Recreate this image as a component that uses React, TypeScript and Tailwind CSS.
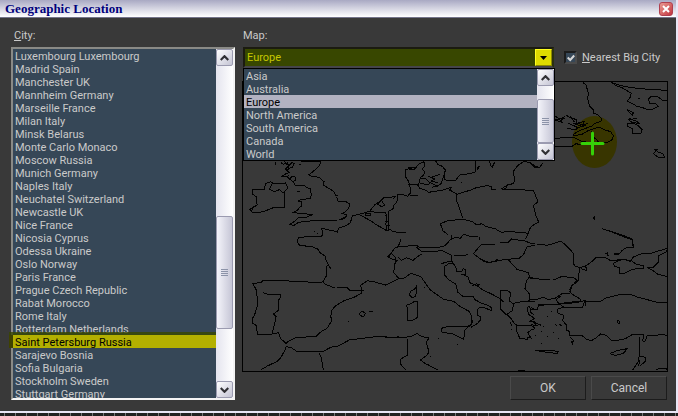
import { ReactNode } from "react";

const cities = [
  "Luxembourg Luxembourg", "Madrid Spain", "Manchester UK", "Mannheim Germany",
  "Marseille France", "Milan Italy", "Minsk Belarus", "Monte Carlo Monaco",
  "Moscow Russia", "Munich Germany", "Naples Italy", "Neuchatel Switzerland",
  "Newcastle UK", "Nice France", "Nicosia Cyprus", "Odessa Ukraine", "Oslo Norway",
  "Paris France", "Prague Czech Republic", "Rabat Morocco", "Rome Italy",
  "Rotterdam Netherlands", "Saint Petersburg Russia", "Sarajevo Bosnia",
  "Sofia Bulgaria", "Stockholm Sweden", "Stuttgart Germany",
];

const maps = ["Asia", "Australia", "Europe", "North America", "South America", "Canada", "World"];

// Coastlines and borders, one tile per region; tile units are a third of a map unit.
const tiles = [
  {
    x: 240, y: 155,
    d: "M105 22v9M122 22l8 6 12-4M134 18l4 10 10 2 8-8 6 4-4 10-10 4-6-4M178 28h4M184 20h58l-4 12-8 8-14 12-10 8 10 4h10l12 4 14 12-2 10 16 10 14 8 6 12 8 2M290 126l4 12 24 2 12 8-4 12-10 10-10 6 12 2 2 6-16 8M148 40l-8 8 8 4-14 6-8 6 14 2 6-4M140 20l6 12-10 10 12 10M150 72l6-8 10 2 2 8-8 6-12-8-6-6M160 80l4 10 30 2 6 6 10 2 4 18-2 12-30 4-8 4 10 2v14l-6 4-4 6-14 8 24 4 36 2-20 8h-22l-16 14-12 8 10 4 16-10 34-4 40-2 40 2M296 194h10l16-10M172 108h8M48 102h26l2-16 16-6 8 6 36-2 8 14-12 14v46l-32 0-30 12-30 4-12-10 24-14-4-10 2-14-12-8v-14zM28 164l12-8-6 14M98 82l-10 20 16 8 14-6 12 10M265 328l-8-14v-10l-16-10-8-12-20-8-34-2-8-14 6-10 30-4 34 2 8-6-4-20 10 2 26 6 12 4 2-12 22-8 14-8 6-22 20-4 28-8 32 2 20 2 4 10-4 26M360 180l30 16 20 14 30 16-2-16h12M376 176h16v4h-16zM386 172l18-22 14-10 14-12 12-2M414 148l10-12 10 14-8 6zM222 230h3M232 236h3M444 302l6 4",
  },
  {
    x: 240, y: 260,
    d: "M258 0l6 12 8 14M262 14l-4 18v18l-10 16-30 2-30-4-24 2-24-4-50-2h-20l-8 8-24 2 12 22 2 30v16l-8 26-6 10v16l10 6 4 22v6h36l28-6 6 18 16 14 10-8 20-10 60-2 14-14 20-12 14-24-4-10 4-20 10-12 26-16 30-10 22-12 2-8-4-16 20-14 22 4 28 8h12M248 66l10 8 22 8h6M292 82l30 2 6 6 44 2M70 98l16 6 12-2 24 2v8l-8 10v30l-14 10 8 8-4 20-4 18-4 12M62 330l20-12 30-14 10-10 14-26 2-8 14 2 18 12 76 2 26-14 22-4 34-18 62-8 40-4 24 6 24-4M236 278l8 16 6 36M360 158l8-4 8 6-4 8h-8l-6-5zM388 155h10M324 184h3",
  },
  {
    x: 385, y: 155,
    d: "M118 20l-18 8-6 8-34 8M70 36h24l-6 6h-16zM118 20v14l-6 8 8 10-4 8-10 8-4 16-4 6M60 44v20l8 10 6 14 2 14v12l-8 10-12-4-18-2-2 22-10 12v8l-14 8-2 20v32l14 10 38 4M8 128l24-4-8 8M0 180h4v12M0 200h10v26H0M104 70h16l14 12 24 12M130 64l20 8-12 6M104 84l24 6 12-10 18 2M136 68l30-10M140 98l14-6M76 120h22M152 18l6 10 14 6 10 12-14 40-14 8M180 48l-2 24 10 6 24-2 12-16 30-4 18-6v-32M276 44l10-12-10 6zM228 82h3M314 18l2 14 6 4 8-16M70 88l28 2 6 10 20 6 6 6 40-6 20-6 10 8M184 100l14-2-4 8 16 8 6 4 44-14 14-6 30-6 16 2v8h12M348 102l20-12-4 8-10 6h40l50 2M366 90l18-4 4-8-2-30 12-16 18-12 20 2 14 12 10 2M215 116v22l8 20 4 14 6 18M166 206l20-8 46-6 30 8 14 10 14-4 12 8 30 8 20 12 8-4 58 2 8 4M166 206l8 22 14 10M200 240v12l14-6 12 4 10-12 20 6h24M284 246v8M200 250l-20 22-24 6-50 0-10-6-52 2-14 4-14 20-8 8 28 12M48 252l-10 28M94 276l16 14h40l20-4 28 14v18l-30 8M18 294l14 14v20M40 308l10 8 14-8 20 8 20-16 8-4M208 302h30l10-4M330 268h-40l-10 10-14 18 20 16 24 10 20-2 14-4 34-4 24-2 14-12 10-22 24-6M344 264l26-2 10-10 40 6 20 8h10M422 252l6-14 8-20 12-10M448 148l-4 6 4 8M370 312l8 10M200 318l8 10",
  },
  {
    x: 385, y: 260,
    d: "M38 0l-8 8-4 30 16 18-30 14-12 6M42 56l16-2 20-14 30 10 8 12 20 28 40 28 30 6 20 16 26 14 8 16v18l-6 12M258 202l20-12 8-10v-10l-10-6v-14l8-8 16 2 20 8v-8l-10-8-20-6-22-12-2-8-34-2-14-12-6-24-20-12-14-16v-24l12-8 14-2 8 10 4 16 14-2 4-8 8 2v14h-12l20 10 4 16 20 8 20 14 30 14 24 14 8 8M262 76l6-1M274 68l8 12M274 78l12-6M346 106v-14l20-2 10 8-2 26 12 8-4 20-18 12-18-18 2-40M386 130l30-6h34M366 164l14 14 6 10 10 8h42l12 8M376 186l4 12M394 198l2 18 8 18h12l10 6 2-8 10 2-10-16 10-8 12-4M428 140h6l4 18 10 6M428 140v14l4 10 16 12-16 8h18M370 0l26 28 34 10 6 18h14M432 52l-8 12-4 22 12 14 2 20-8 4M292 2l16 6 20-4 10-6M94 80l-4 6-14 8-2 12 8 8 8-4 6-14zM98 126l-10-2-8 6-16 6 4 10-2 34 14 2 18-10zM168 210l6-8 20-2 56 0-10 10-4 28-16-8-16-8-34-6zM250 198l10-6 4-12M0 232h60l20-4 16-8 14 10 22 4-8 12 4 16 4 14-6 10-20 14 14 10 40 20M66 236v50l-20 12 2 16 14 16M118 82h3M160 236h3M216 253h3M134 290h3M228 44h3M378 208h3M130 314h3M400 330h20",
  },
  {
    x: 530, y: 75,
    d: "M158 22l10 8 4 14 4 14-4 8 6 26 12 12v10l14 6 10 10v8l-20 8-10 8-34 12-20 12M244 22l30 10 30 6 40 4 66 4M248 24l10 8 18 6 20 12 8 4-4 14-8 10 6 4 10 4 12 8 18 4 14 6 18-2 14-8-6-8-20-2-2-12 8-8 20 2 14 10h24M323 70h6M290 104l14 6 8 4-8 4-12-12M306 110v12M296 130l26 10 6 6-22-4-10-8 24-4M292 146l14-2 16 6 14 14-4 12h-24l-2-16-14-6zM372 222l14 10 12 4 6 12-20-2-14-10 8-8 4-6M76 124l14 8 12-6-6 10-20-4M76 136l20 6-4-12 14 2M108 120l12 8 20 6v10l24 8-20 6-30-14M110 160l26 4 18-10-20-8 28-6-4 12 16-8M120 124l14 18M76 190l54-4 22 12 20 4 12 6M130 182l26-4 20-12 30-10 16 8 20 6 8 12-4 12-14 8h-26l-8-10-14-10 2-14M76 214h50l12-8 18 4 30-4M0 264l16 14 14-2 8-12",
  },
  {
    x: 530, y: 180,
    d: "M0 30h10l8 20 6 16-14 10 8 32 8 18-20 12-6 6M0 190l12 1M22 192l30 4 40-12 12 8 14 14 12 14v30l6 10 16 2 18-6 14-10 14-14h26l18 10h30M226 222l6-4v8h6M150 264l-4 20-2 20-18 12-8 14M154 266l16 6v-10l-14-4M0 292l16 4 44 4M70 300l24-10 34 2 14 8M190 116l4-8v12M216 146l30 10 40 16 22 8 2 22h-20l-14 10-6 8-18 2 16 0M230 150l50 16 28 12v20M260 238l30 2 12 6M270 240l-20 10 4 10 14 2v18h14l24-12 36-4-2-8-20-2-16-12h-16M302 246l6-14 24-10 30-2 46-14 4 2-4 8-24 12 2 18-16 16h-18l20 12 10 8 30 8",
  },
  {
    x: 530, y: 280,
    d: "M142 0l-16 18-6 16 6 8 26 16v6l-26 2-24 2M0 58h20l20-6 14 6 20-2 14-10 10-6h22M78 60l14-12M78 60l10 12 50-4 26-6-6 20-16 2-40-2-14-10-60 4M158 62h8v16M164 64l44 2 20-12 40-10h36l20 8 24 6 30 8 34 2M100 82l-18 6 2 12 18 6-4 16 12 14-2 14 10 4v12l40 2 12 10 14 4 14-8 14-12 16 4 18 16 20-2 20-4 20-12h34l2 6-6 12 8 4 8-20 26 0 20-4 16 6M124 184l6 12M122 172l8 10-4 10M262 122l8 2-2 6-6-2zM242 220l18-8 32-6-12 14-22 6-14-2zM16 210h30l40 4-4 6-26-2-36-6M328 172v54l-4 20-16 24M330 228l16 4v12l-16 14M330 240l-4 18M378 268l24-4 10 4M0 90l22-2 4-14h30M0 120l14 8 20 8M4 134l20 4M0 106l12 8M10 124l10 14M64 94h3M50 110h3M74 132l8 6M88 132l6 6M38 140h3M68 156h3M32 154h3M16 166h3M52 168h3M84 176h3M34 190h3M0 170h3M2 80l10 8",
  },
];

function EuropeMap() {
  return (
    <svg viewBox="243 82 424 289" preserveAspectRatio="none" className="block h-full w-full" role="img" aria-label="Map of Europe">
      <ellipse cx="594.5" cy="142" rx="22.5" ry="26" fill="#383500" />
      {tiles.map((t) => (
        <path
          key={`${t.x}-${t.y}`}
          d={t.d}
          transform={`translate(${t.x} ${t.y}) scale(${1 / 3})`}
          fill="none"
          stroke="#000"
          strokeWidth="3"
          shapeRendering="crispEdges"
        />
      ))}
      <path
        d="M582 143.5h9M594 143.5h9M592.5 133v9M592.5 145v9"
        stroke="#36d108"
        strokeWidth="3"
        strokeLinecap="round"
        fill="none"
      />
    </svg>
  );
}

function Arrow({ up }: { up?: boolean }) {
  return (
    <button
      type="button"
      aria-label={up ? "Scroll up" : "Scroll down"}
      className="flex h-[17px] w-full shrink-0 items-center justify-center rounded-[2px] border border-[#9b9bb0] bg-linear-to-br from-white to-[#c4c4d4]"
    >
      <svg width="9" height="6" viewBox="0 0 9 6">
        <path d={up ? "M.7 5l3.8-3.8L8.3 5" : "M.7 1l3.8 3.8L8.3 1"} fill="none" stroke="#303034" strokeWidth="2.2" />
      </svg>
    </button>
  );
}

function ScrollBar({ children }: { children: ReactNode }) {
  return (
    <div className="flex w-[17px] shrink-0 flex-col bg-linear-to-r from-[#e4e4ee] to-white">
      <Arrow up />
      <div className="flex min-h-0 flex-1 flex-col">{children}</div>
      <Arrow />
    </div>
  );
}

function Grip() {
  return (
    <span className="flex flex-col gap-px">
      <i className="h-px w-[7px] bg-[#8c93a8]" />
      <i className="h-px w-[7px] bg-[#8c93a8]" />
      <i className="h-px w-[7px] bg-[#8c93a8]" />
      <i className="h-px w-[7px] bg-[#8c93a8]" />
    </span>
  );
}

const thumb =
  "flex w-full basis-0 items-center justify-center rounded-[2px] border border-[#9b9bb0] bg-linear-to-r from-[#f4f4fa] to-[#c6c6d6]";

const row = "h-[13px] pl-[2px] leading-[15px]";

const pushButton =
  "h-6 w-[76px] border border-t-[#4a4a4a] border-r-[#1c1c1c] border-b-[#1c1c1c] border-l-[#4a4a4a] bg-[#393939] text-center text-[12px]";

export default function App() {
  return (
    <div className="bg-[#222] font-['Liberation_Sans_Narrow','Roboto','Liberation_Sans',sans-serif] text-[11px] leading-[13px] text-[#cacaca]">
      <div className="border-r-2 border-b-2 border-[#e9e6f6] bg-[#393939]">
        <header className="flex h-[18px] items-center justify-between border-b border-[#74748a] bg-linear-to-b from-[#a9a9c3] via-[#d5d5e2] to-white pr-[3px] pl-[5px]">
          <h1 className="font-['Liberation_Serif',serif] text-[13px] leading-4 font-bold text-[#00007c]">Geographic Location</h1>
          <button
            type="button"
            aria-label="Close"
            className="flex h-[14px] w-[14px] items-center justify-center rounded-[3px] border border-[#b04050] bg-linear-to-br from-[#e79a92] to-[#c22f40]"
          >
            <svg width="8" height="8" viewBox="0 0 8 8">
              <path d="M1 1l6 6M7 1L1 7" stroke="#fff" strokeWidth="2" />
            </svg>
          </button>
        </header>

        <main className="flex gap-[7px] pt-[11px] pr-[8px] pb-[11px] pl-[11px]">
          <section className="flex w-[224px] shrink-0 flex-col">
            <h2 id="city-label" className="h-[18px] pl-[3px]">
              <u>C</u>ity:
            </h2>
            <div className="relative flex h-[353px] border-2 border-t-[#8a8a86] border-r-[#f4f4f4] border-b-[#f4f4f4] border-l-[#8a8a86] bg-[#364757]">
              <ul role="listbox" aria-labelledby="city-label" className="min-w-0 flex-1 overflow-hidden">
                {cities.map((c) => {
                  const on = c === "Saint Petersburg Russia";
                  return (
                    <li
                      key={c}
                      role="option"
                      aria-selected={on}
                      className={on ? `${row} bg-[#b3b000] text-black` : row}
                    >
                      {c}
                    </li>
                  );
                })}
              </ul>
              <div className="pointer-events-none absolute top-[283px] right-[17px] -left-1 h-[3px] bg-[#384700]/80" />
              <div className="pointer-events-none absolute top-[286px] -left-1 h-[13px] w-1 bg-[#3f4200]" />
              <ScrollBar>
                <div className="grow-[151] basis-0" />
                <div className={`${thumb} grow-[112]`}>
                  <Grip />
                </div>
                <div className="grow-[53] basis-0" />
              </ScrollBar>
            </div>
          </section>

          <section className="flex min-w-0 flex-1 flex-col">
            <label htmlFor="map" className="h-[18px] pl-px">
              Map:
            </label>
            <div className="flex h-[21px] gap-[10px]">
              <div className="relative ml-px min-w-0 flex-1">
                <div className="relative h-[21px] border-t-2 border-l-2 border-[#1b1b10] border-r-2 border-b-2 border-r-[#2b3010] border-b-[#45444a] bg-[#384700]">
                  <select
                    id="map"
                    defaultValue="Europe"
                    className="block h-[18px] w-full appearance-none bg-transparent pl-[2px] text-[11px] leading-[18px] text-[#c6c800] outline-none"
                  >
                    {maps.map((m) => (
                      <option key={m}>{m}</option>
                    ))}
                  </select>
                  <span className="pointer-events-none absolute top-0 right-0 flex h-[17px] w-[17px] items-center justify-center border border-t-[#ffff20] border-r-[#8d8a00] border-b-[#8d8a00] border-l-[#ffff20] bg-[#dedb00]">
                    <svg width="7" height="4" viewBox="0 0 7 4">
                      <path d="M0 0h7L3.500 4z" fill="#000" />
                    </svg>
                  </span>
                </div>
                <div className="absolute top-[21px] -right-px left-0 z-10 flex border border-black bg-[#364757]">
                  <ul role="listbox" aria-label="Map choices" className="min-w-0 flex-1">
                    {maps.map((m) => (
                      <li
                        key={m}
                        role="option"
                        aria-selected={m === "Europe"}
                        className={m === "Europe" ? `${row} bg-[#b2b2c1] text-black` : row}
                      >
                        {m}
                      </li>
                    ))}
                  </ul>
                  <ScrollBar>
                    <div className="grow-[14] basis-0" />
                    <div className={`${thumb} grow-[44]`}>
                      <Grip />
                    </div>
                  </ScrollBar>
                </div>
              </div>
              <label className="flex w-[104px] items-center gap-[5px] whitespace-nowrap">
                <input type="checkbox" defaultChecked className="peer sr-only" />
                <span className="flex h-[13px] w-[13px] items-center justify-center border-2 border-t-[#1c1c1c] border-r-[#4a4a4a] border-b-[#4a4a4a] border-l-[#1c1c1c] bg-[#364757]">
                  <svg width="8" height="8" viewBox="0 0 8 8">
                    <path d="M.7 3.500l2.500 2.500 4-4.500" fill="none" stroke="#d6d6d6" strokeWidth="2" />
                  </svg>
                </span>
                <span>
                  <u>N</u>earest Big City
                </span>
              </label>
            </div>
            <div className="mt-[13px] h-[291px] border border-black">
              <EuropeMap />
            </div>
            <div className="mt-[4px] flex justify-end gap-[5px] pr-px">
              <button type="button" className={pushButton}>OK</button>
              <button type="button" className={pushButton}>Cancel</button>
            </div>
          </section>
        </main>
      </div>
      <div className="h-[3px] bg-[repeating-linear-gradient(90deg,#222_0_4px,#777_4px_5px,#222_5px_11px)]" />
    </div>
  );
}
